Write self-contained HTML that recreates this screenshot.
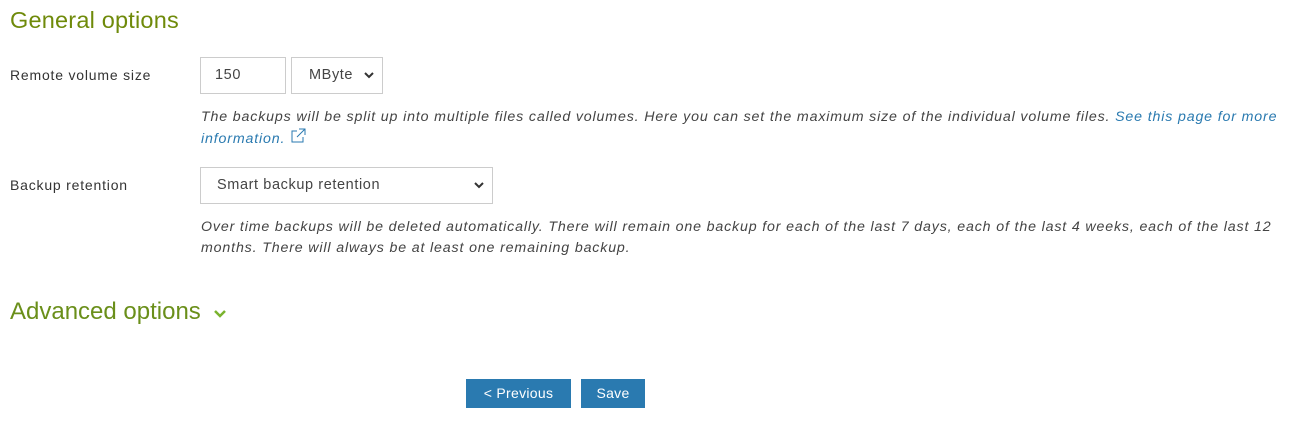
<!DOCTYPE html>
<html><head><style>
body{margin:0;width:1291px;height:425px;background:#fff;font-family:"Liberation Sans",sans-serif;color:#333;position:relative;overflow:hidden}
.a{position:absolute;white-space:nowrap}
h2{position:absolute;margin:0;font-weight:normal;color:#6f8a0a;font-size:23px}
.lbl{font-size:14px;color:#333;letter-spacing:0.8px}
.box{position:absolute;border:1px solid #ccc;box-sizing:border-box;background:#fff;font-size:14.5px;color:#444;letter-spacing:0.6px}
.help{position:absolute;left:201px;font-style:italic;font-size:14.2px;color:#444;line-height:21px;width:1085px;letter-spacing:0.85px}
.help a{color:#2a7ab0;text-decoration:none}
.chev{position:absolute;right:8px;top:13px}
.btn{position:absolute;background:#2a7ab0;color:#fff;font-size:14px;text-align:center;line-height:29px;top:379px;height:29px;letter-spacing:0.3px}
</style></head><body>
<h2 style="left:10px;top:7px;font-size:23.5px;letter-spacing:0.2px">General options</h2>
<div class="a lbl" style="left:10px;top:67px">Remote volume size</div>
<div class="box" style="left:200px;top:57px;width:86px;height:37px;padding:9px 0 0 14px">150</div>
<div class="box" style="left:291px;top:57px;width:92px;height:37px;padding:9px 0 0 17px">MByte
<svg class="chev" width="10" height="8" viewBox="0 0 10 8"><path d="M1 2l4 4 4-4" stroke="#333" stroke-width="2" fill="none"/></svg></div>
<div class="help" style="top:107px">The backups will be split up into multiple files called volumes. Here you can set the maximum size of the individual volume files. <a>See this page for more information.</a> <svg width="16" height="16" viewBox="0 0 16 16" style="vertical-align:-1px"><path d="M7 3H2v11h11V9" stroke="#2a7ab0" fill="none"/><path d="M9 1h6v6M15 1L7 9" stroke="#2a7ab0" fill="none"/></svg></div>
<div class="a lbl" style="left:10px;top:177px">Backup retention</div>
<div class="box" style="left:200px;top:167px;width:293px;height:37px;padding:9px 0 0 16px">Smart backup retention
<svg class="chev" width="10" height="8" viewBox="0 0 10 8"><path d="M1 2l4 4 4-4" stroke="#333" stroke-width="2" fill="none"/></svg></div>
<div class="help" style="top:217px">Over time backups will be deleted automatically. There will remain one backup for each of the last 7 days, each of the last 4 weeks, each of the last 12 months. There will always be at least one remaining backup.</div>
<h2 style="left:10px;top:298px;font-size:24px;color:#6a8f1a">Advanced options <svg width="14" height="10" viewBox="0 0 14 10" style="margin-left:6px"><path d="M2 2l5 5 5-5" stroke="#7ab32e" stroke-width="2.5" fill="none"/></svg></h2>
<div class="btn" style="left:466px;width:105px">&lt; Previous</div>
<div class="btn" style="left:581px;width:64px">Save</div>
</body></html>
